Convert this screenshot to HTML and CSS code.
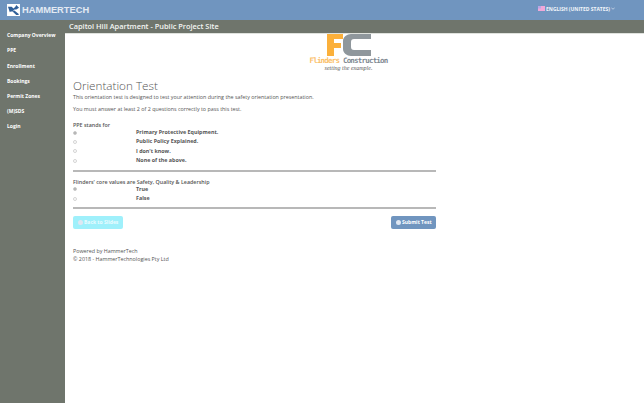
FILE: index.html
```html
<!DOCTYPE html>
<html lang="en">
<head>
<meta charset="utf-8">
<title>Orientation Test</title>
<link rel="stylesheet" href="styles.css">
</head>
<body>
<header class="topbar">
  <div class="brand">
    <svg class="brand-icon" width="13" height="12" viewBox="0 0 14 13"><rect width="14" height="13" fill="#fff"/><path d="M1 3h4l2 2 2-2 1-2 3 3-3 2-2 0-2 2-2 0-1 1zM6 8l2-1 5 4-1 1-2 0z" fill="#2f5f99"/></svg>
    <span class="brand-name">HAMMERTECH</span>
  </div>
  <div class="lang">
    <svg class="flag" width="7" height="5" viewBox="0 0 7 5"><rect width="7" height="5" fill="#f0a8d8"/><rect width="3" height="2.5" fill="#b9a6e6"/></svg>
    <span>ENGLISH (UNITED STATES)</span>
    <svg class="caret" width="4" height="3" viewBox="0 0 4 3"><path d="M.3.6 2 2.3 3.7.6" fill="none" stroke="#dfe7f2" stroke-width=".7"/></svg>
  </div>
</header>
<div class="shell">
  <nav class="sidebar">
    <a>Company Overview</a>
    <a>PPE</a>
    <a>Enrollment</a>
    <a>Bookings</a>
    <a>Permit Zones</a>
    <a>(M)SDS</a>
    <a>Login</a>
  </nav>
  <div class="page">
    <div class="sitebar">Capitol Hill Apartment - Public Project Site</div>
    <main class="content">
      <div class="logo">
        <svg class="logo-mark" width="44" height="22" viewBox="0 0 44 22">
          <path d="M0 0H16V5H7V9H14V14H7V22H0Z" fill="#fbb03b"/>
          <path d="M44 0V5H27C25 5 24 6 24 8V13C24 15 25 16 27 16H44V22H24C20 22 16 19 16 15V7C16 3 20 0 24 0Z" fill="#8f979c"/>
        </svg>
        <div class="logo-name"><span class="logo-orange">Flinders</span> Construction</div>
        <div class="logo-tag">setting the example.</div>
      </div>
      <h1>Orientation Test</h1>
      <p class="intro">This orientation test is designed to test your attention during the safety orientation presentation.</p>
      <p class="intro">You must answer at least 2 of 2 questions correctly to pass this test.</p>

      <section class="question">
        <div class="q-title">PPE stands for</div>
        <div class="answer"><span class="radio checked"></span><span>Primary Protective Equipment.</span></div>
        <div class="answer"><span class="radio"></span><span>Public Policy Explained.</span></div>
        <div class="answer"><span class="radio"></span><span>I don't know.</span></div>
        <div class="answer"><span class="radio"></span><span>None of the above.</span></div>
      </section>

      <section class="question">
        <div class="q-title">Flinders' core values are Safety, Quality &amp; Leadership</div>
        <div class="answer"><span class="radio checked"></span><span>True</span></div>
        <div class="answer"><span class="radio"></span><span>False</span></div>
      </section>

      <div class="actions">
        <button class="btn btn-back"><span class="dot"></span>Back to Slides</button>
        <button class="btn btn-submit"><span class="dot"></span>Submit Test</button>
      </div>

      <footer class="foot">
        <div>Powered by HammerTech</div>
        <div>© 2018 - HammerTechnologies Pty Ltd</div>
      </footer>
    </main>
  </div>
</div>
</body>
</html>
```
FILE: styles.css
```css
* { box-sizing: border-box; }
html, body { margin: 0; height: 100%; }
body {
  display: flex;
  flex-direction: column;
  height: 403px;
  overflow: hidden;
  font-family: "Open Sans", "Liberation Sans", sans-serif;
  font-size: 5.35px;
  color: #555;
  background: #fff;
}
.topbar {
  height: 20px;
  flex: none;
  display: flex;
  align-items: center;
  justify-content: space-between;
  padding: 0 29px 0 7px;
  background: #7095bf;
  color: #fff;
}
.brand { display: flex; align-items: center; gap: 2px; }
.brand-icon { display: block; }
.brand-name {
  font-family: "Liberation Sans", sans-serif;
  font-size: 9.3px;
  font-weight: 700;
  color: #e3eaf3;
}
.lang {
  display: flex;
  align-items: center;
  gap: 1px;
  font-size: 5px;
  font-weight: 700;
  color: #f2f5fa;
  margin-bottom: 3px;
  white-space: nowrap;
}
.flag, .caret { display: block; }
.shell { flex: 1; display: flex; min-height: 0; }
.sidebar {
  width: 65px;
  flex: none;
  background: #6f756c;
  display: flex;
  flex-direction: column;
  gap: 6.2px;
  padding: 12.3px 0 0 7px;
  color: #fff;
  font-size: 5px;
  font-weight: 700;
}
.sidebar a { display: block; height: 9px; line-height: 7px; white-space: nowrap; }
.page { flex: 1; display: flex; flex-direction: column; min-width: 0; }
.sitebar {
  height: 13.5px;
  flex: none;
  padding-left: 4px;
  background: #6f756c;
  border-bottom: 1px solid #dfe2dd;
  color: #f4f5f3;
  font-size: 7.4px;
  font-weight: 600;
  line-height: 12px;
  white-space: nowrap;
}
.content { flex: 1; padding: 0 208px 0 8px; }
.logo {
  display: flex;
  flex-direction: column;
  align-items: center;
  height: 44px;
  margin-right: -208px;
  padding-right: 20px;
}
.logo-mark { display: block; }
.logo-name {
  margin-top: 1px;
  font-family: "DejaVu Sans Mono", monospace;
  font-size: 7.5px;
  font-weight: 700;
  line-height: 8px;
  letter-spacing: -.8px;
  color: #7f8a92;
  white-space: nowrap;
}
.logo-orange { color: #fbc06a; }
.logo-tag {
  font-family: "Liberation Serif", serif;
  font-style: italic;
  font-size: 6px;
  line-height: 6px;
  color: #5c5c5c;
  white-space: nowrap;
}
h1 {
  margin: 0;
  font-size: 11.7px;
  font-weight: 300;
  line-height: 15px;
  color: #555;
}
.intro {
  margin: 1.5px 0 5px;
  line-height: 7px;
  white-space: nowrap;
}
.question {
  margin-top: 9px;
  padding-bottom: 4.3px;
  border-bottom: 2px solid #b8b8b8;
}
.question + .question { margin-top: 7px; padding-bottom: 3.5px; }
.q-title { font-weight: 600; line-height: 7px; white-space: nowrap; margin-bottom: -1px; }
.answer {
  display: flex;
  align-items: center;
  height: 9.33px;
  font-weight: 700;
  line-height: 7px;
}
.answer > span:last-child { margin-left: 59px; }
.radio {
  width: 4px;
  height: 4px;
  border: .5px solid #d4d4d4;
  border-radius: 50%;
  flex: none;
}
.radio.checked { background: #b0b0b0; border-color: #ccc; }
.actions {
  display: flex;
  justify-content: space-between;
  margin-top: 7px;
}
.btn {
  display: flex;
  align-items: center;
  gap: 1px;
  height: 13px;
  padding: 0 0 0 5px;
  border: 0;
  border-radius: 2px;
  color: #fff;
  font: 700 5px "Open Sans", "Liberation Sans", sans-serif;
  white-space: nowrap;
}
.btn .dot {
  width: 5px;
  height: 5px;
  border-radius: 50%;
  background: #dfe7f2;
  flex: none;
}
.btn-back { width: 50px; background: #9ff0fb; color: #eafcff; }
.btn-submit { width: 45px; background: #7095bf; }
.foot { margin-top: 18.5px; line-height: 8px; }
```
